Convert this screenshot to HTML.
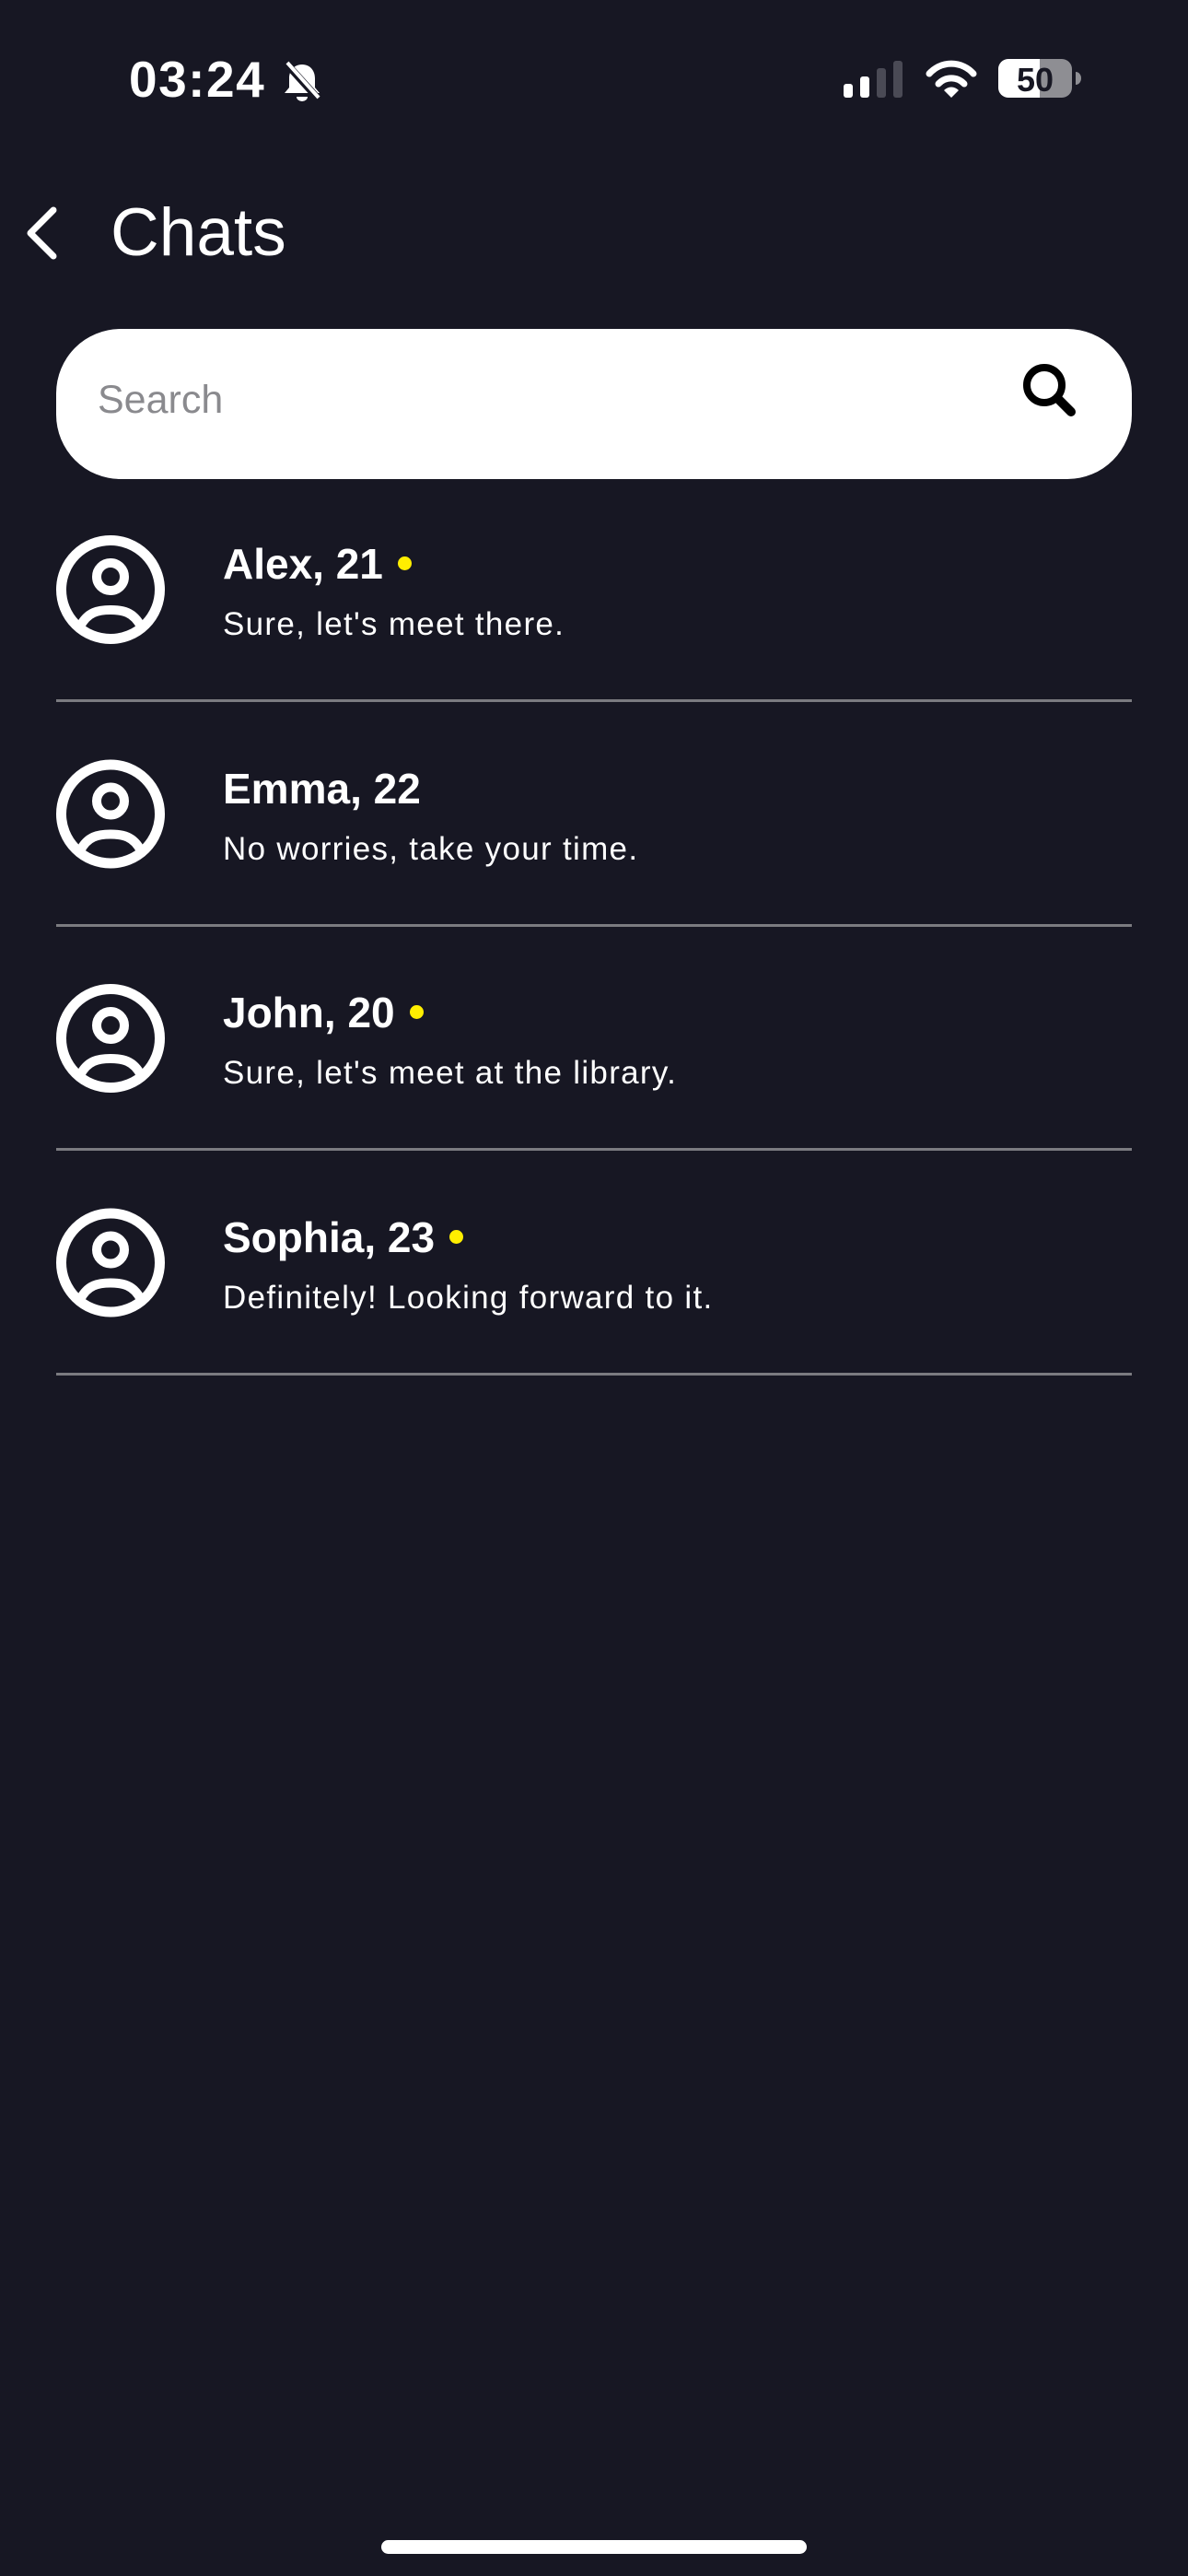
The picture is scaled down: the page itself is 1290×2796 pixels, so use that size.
<!DOCTYPE html>
<html><head><meta charset="utf-8">
<style>
*{margin:0;padding:0;box-sizing:border-box}
html,body{width:1290px;height:2796px;background:#171723;overflow:hidden}
body{position:relative;font-family:"Liberation Sans",sans-serif;color:#fff}
.abs{position:absolute}
.time{left:140px;top:56px;font-size:55px;font-weight:bold;letter-spacing:1.5px;line-height:60px}
.title{left:120px;top:210px;font-size:73px;line-height:86px}
.search{left:61px;top:357px;width:1168px;height:163px;background:#fff;border-radius:70px}
.search span{position:absolute;left:45px;top:52px;font-size:43px;color:#8a8a8e;line-height:50px}
.name{left:242px;font-size:46px;font-weight:bold;line-height:52px;white-space:nowrap}
.name i{display:inline-block;width:15px;height:15px;border-radius:50%;background:#ffee00;margin-left:16px;vertical-align:middle;position:relative;top:-4px}
.msg{left:242px;font-size:35px;line-height:40px;white-space:nowrap;letter-spacing:1.3px}
.div{left:61px;width:1168px;height:3px;background:#7b7b80}
.home{left:414px;top:2757px;width:462px;height:15px;border-radius:8px;background:#fff}
</style></head><body>
<div class="abs time">03:24</div>
<svg class="abs" style="left:298px;top:60px" width="60" height="60" viewBox="0 0 60 60">
<path d="M30 10c-9 0-14 7-14 15v10l-5 6h38l-5-6V25c0-8-5-15-14-15z" fill="#fff"/>
<path d="M24 45a6 5 0 0 0 12 0z" fill="#fff"/>
<line x1="12" y1="8" x2="50" y2="50" stroke="#171723" stroke-width="8"/>
<line x1="14" y1="8" x2="48" y2="46" stroke="#fff" stroke-width="4"/>
</svg>
<svg class="abs" style="left:910px;top:60px" width="280" height="52" viewBox="910 60 280 52">
<rect x="916" y="91" width="10" height="15" rx="3" fill="#fff"/>
<rect x="934" y="83" width="10" height="23" rx="3" fill="#fff"/>
<rect x="952" y="74" width="10" height="32" rx="3" fill="#4a4a55"/>
<rect x="970" y="66" width="10" height="40" rx="3" fill="#4a4a55"/>
<path d="M1009 80 A32 32 0 0 1 1057 80" stroke="#fff" stroke-width="7" fill="none" stroke-linecap="round"/>
<path d="M1019 91 A19 19 0 0 1 1047 91" stroke="#fff" stroke-width="7" fill="none" stroke-linecap="round"/>
<path d="M1033 106 L1025 98 A11 11 0 0 1 1041 98 Z" fill="#fff"/>
<rect x="1084" y="64" width="80" height="42" rx="11" fill="#8e8e93"/>
<path d="M1095 64 H1129 V106 H1095 A11 11 0 0 1 1084 95 V75 A11 11 0 0 1 1095 64Z" fill="#fff"/>
<path d="M1168 78 a6 7 0 0 1 0 14z" fill="#8e8e93"/>
<text x="1124" y="99" text-anchor="middle" font-family="Liberation Sans" font-weight="bold" font-size="36" fill="#171723">50</text>
</svg>
<svg class="abs" style="left:0;top:200px" width="100" height="100" viewBox="0 200 100 100">
<path d="M58 228 L33 253 L58 278" stroke="#fff" stroke-width="7" fill="none" stroke-linecap="round" stroke-linejoin="round"/>
</svg>
<div class="abs title">Chats</div>
<div class="abs search"><span>Search</span>
<svg class="abs" style="left:1045px;top:32px" width="80" height="80" viewBox="1106 389 80 80">
<circle cx="1134" cy="418" r="19" stroke="#000" stroke-width="8" fill="none"/>
<line x1="1148" y1="432" x2="1163" y2="447" stroke="#000" stroke-width="10" stroke-linecap="round"/>
</svg></div>

<svg class="abs" style="left:0;top:0" width="1290" height="1500" viewBox="0 0 1290 1500">
<defs><g id="av">
<circle cx="120" cy="0" r="53.5" stroke="#fff" stroke-width="11" fill="none"/>
<circle cx="120" cy="-14" r="15" stroke="#fff" stroke-width="10" fill="none"/>
<path d="M87 40 C95 24 107 22 120 22 C133 22 145 24 153 40" stroke="#fff" stroke-width="10" fill="none"/>
</g></defs>
<use href="#av" y="640"/>
<use href="#av" y="883.5"/>
<use href="#av" y="1127"/>
<use href="#av" y="1370.5"/>
</svg>

<div class="abs name" style="top:586px">Alex, 21<i></i></div>
<div class="abs msg" style="top:658px">Sure, let's meet there.</div>
<div class="abs div" style="top:759px"></div>

<div class="abs name" style="top:829.5px">Emma, 22</div>
<div class="abs msg" style="top:901.5px">No worries, take your time.</div>
<div class="abs div" style="top:1002.5px"></div>

<div class="abs name" style="top:1073px">John, 20<i></i></div>
<div class="abs msg" style="top:1145px">Sure, let's meet at the library.</div>
<div class="abs div" style="top:1246px"></div>

<div class="abs name" style="top:1316.5px">Sophia, 23<i></i></div>
<div class="abs msg" style="top:1388.5px">Definitely! Looking forward to it.</div>
<div class="abs div" style="top:1489.5px"></div>

<div class="abs home"></div>
</body></html>
